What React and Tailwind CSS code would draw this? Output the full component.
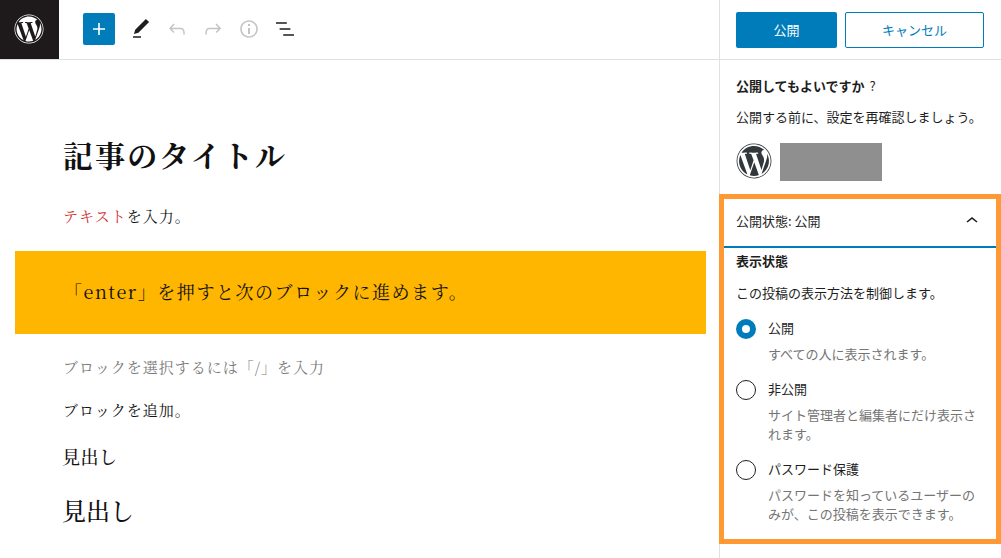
import { FaWordpress } from 'react-icons/fa'

const Icon = ({ d, className }) => (
    <svg viewBox="0 0 24 24" className={`w-6 h-6 fill-current ${className}`}>
        <path d={d} />
    </svg>
)

const ToolButton = ({ d, className }) => (
    <div className="w-9 h-9 flex items-center justify-center">
        <Icon d={d} className={className} />
    </div>
)

const RadioOption = ({ label, help, checked, className }) => (
    <div className={`flex ${className}`}>
        {checked
            ? <div className="w-5 h-5 mt-[1px] rounded-full border-[6px] border-[#007cba] bg-white shrink-0" />
            : <div className="w-5 h-5 mt-[1px] rounded-full border border-[#1e1e1e] bg-white shrink-0" />}
        <div className="ml-3 min-w-0">
            <p className="text-[13px] leading-[20px] text-[#1e1e1e]">{label}</p>
            <p className="mt-[6px] text-[13px] leading-[19.5px] text-[#757575]">{help}</p>
        </div>
    </div>
)

const Toolbar = () => (
    <div className="flex items-center h-[60px] shrink-0 border-b border-[#e0e0e0]">
        <div className="w-[59px] h-full bg-[#1e1a1c] flex items-center justify-center text-white shrink-0 pr-px pb-px">
            <FaWordpress className="w-[30px] h-[30px]" />
        </div>
        <div className="ml-6 -mt-px w-8 h-8 rounded-[2px] bg-[#007cba] text-white flex items-center justify-center">
            <Icon d="M18 11.2h-5.2V6h-1.6v5.2H6v1.6h5.2V18h1.6v-5.2H18z" />
        </div>
        <div className="ml-2 -mt-px flex items-center">
            <ToolButton className="text-[#1e1e1e]" d="M20.1 5.1L16.9 2 6.2 12.7l-1.3 4.4 4.5-1.3L20.1 5.1zM4 20.8h8v-1.5H4v1.5z" />
            <ToolButton className="text-[#c4c4c4]" d="M18.3 11.7c-.6-.6-1.4-.9-2.3-.9H6.7l2.9-3.3-1.1-1-4.5 5L8.5 16l1-1-2.7-2.7H16c.5 0 .9.2 1.3.5 1 1 1 3.4 1 4.5v.3h1.5v-.2c0-1.5 0-4.3-1.5-5.7z" />
            <ToolButton className="text-[#c4c4c4]" d="M15.6 6.5l-1.1 1 2.9 3.3H8c-.9 0-1.7.3-2.3.9-1.4 1.5-1.4 4.2-1.4 5.6v.2h1.5v-.3c0-1.1 0-3.5 1-4.5.3-.3.7-.5 1.3-.5h9.2L14.5 15l1.1 1.1 4.6-4.6-4.6-5z" />
            <ToolButton className="text-[#c4c4c4]" d="M12 3.2c-4.8 0-8.8 3.9-8.8 8.8 0 4.8 3.9 8.8 8.8 8.8 4.8 0 8.8-3.9 8.8-8.8 0-4.8-4-8.8-8.8-8.8zm0 16c-4 0-7.2-3.3-7.2-7.2C4.8 8 8 4.8 12 4.8s7.2 3.3 7.2 7.2c0 4-3.2 7.2-7.2 7.2zM11 17h2v-6h-2v6zm0-8h2V7h-2v2z" />
            <ToolButton className="text-[#1e1e1e]" d="M13.8 5.2H3v1.5h10.8V5.2zm-3.6 12v1.5H21v-1.5H10.2zm7.2-6H6.6v1.5h10.8v-1.5z" />
        </div>
    </div>
)

const Editor = () => (
    <div className="flex-1 min-w-0 font-['Noto_Serif_CJK_JP','Liberation_Serif','Noto_Sans_CJK_JP',serif] text-[#111]">
        <h1 className="ml-[63px] mt-[72px] text-[30px] leading-[44px] font-bold tracking-[2.1px]">記事のタイトル</h1>
        <p className="ml-[63px] mt-[29px] text-[15px] leading-[22px] tracking-[1px]">
            <span className="text-[#cf2e2e]">テキスト</span>を入力。
        </p>
        <div className="ml-[15px] mr-[13px] mt-[24px] h-[83px] bg-[#ffb600] flex items-center pl-[49px] pb-[3px]">
            <p className="text-[18px] leading-[28px] tracking-[1.55px]">「enter」を押すと次のブロックに進めます。</p>
        </div>
        <p className="ml-[63px] mt-[22px] text-[15px] leading-[22px] tracking-[1px] text-[#7a7a7a]">ブロックを選択するには「/」を入力</p>
        <p className="ml-[63px] mt-[21px] text-[15px] leading-[22px] tracking-[1px]">ブロックを追加。</p>
        <h3 className="ml-[62px] mt-[21px] text-[18px] leading-[28px] font-medium tracking-[0.5px]">見出し</h3>
        <h2 className="ml-[62px] mt-[23px] text-[24px] leading-[34px] font-medium">見出し</h2>
    </div>
)

const PublishPanel = () => (
    <div className="-ml-px h-[350px] border-[5px] border-[#ff9933] bg-white">
        <div className="h-[49px] border-b-2 border-[#007cba] flex items-center justify-between pl-3 pr-3 pb-[3px]">
            <span className="text-[13px] text-[#1e1e1e]">公開状態: 公開</span>
            <svg viewBox="0 0 24 24" className="w-6 h-6 fill-[#1e1e1e]">
                <path d="M6.5 12.4L12 8l5.5 4.4-.9 1.2L12 10l-4.5 3.6-1-1.2z" />
            </svg>
        </div>
        <div className="px-3 pt-[3px]">
            <p className="text-[13px] leading-[20px] font-bold text-[#1e1e1e]">表示状態</p>
            <p className="mt-[12px] text-[13px] leading-[20px] text-[#1e1e1e]">この投稿の表示方法を制御します。</p>
            <RadioOption className="mt-[15px]" checked label="公開" help="すべての人に表示されます。" />
            <RadioOption className="mt-[15px]" label="非公開" help="サイト管理者と編集者にだけ表示されます。" />
            <RadioOption className="mt-[15px]" label="パスワード保護" help="パスワードを知っているユーザーのみが、この投稿を表示できます。" />
        </div>
    </div>
)

const Sidebar = () => (
    <div className="w-[282px] shrink-0 border-l border-[#e0e0e0]">
        <div className="h-[60px] border-b border-[#e0e0e0] flex items-center pl-4 gap-2">
            <button className="w-[101px] h-9 rounded-[2px] bg-[#007cba] text-white text-[13px]">公開</button>
            <button className="w-[139px] h-9 rounded-[2px] border border-[#007cba] text-[#007cba] text-[13px]">キャンセル</button>
        </div>
        <div className="h-[134px] pl-4 pt-[16px]">
            <p className="text-[13px] leading-[20px] font-bold text-[#1e1e1e]">公開してもよいですか <span className="ml-[2px] font-normal">?</span></p>
            <p className="mt-[11px] text-[13px] leading-[20px] text-[#1e1e1e]">公開する前に、設定を再確認しましょう。</p>
            <div className="mt-[16px] flex items-start gap-2">
                <FaWordpress className="w-9 h-9 text-[#32373c]" />
                <div className="w-[102px] h-[38px] bg-[#8f8f8f]" />
            </div>
        </div>
        <PublishPanel />
    </div>
)

export default function App() {
    return (
        <div className="w-[1001px] h-[558px] overflow-hidden bg-white flex font-['Noto_Sans_CJK_JP','Liberation_Sans',sans-serif]">
            <div className="flex flex-col flex-1 min-w-0">
                <Toolbar />
                <Editor />
            </div>
            <Sidebar />
        </div>
    )
}
